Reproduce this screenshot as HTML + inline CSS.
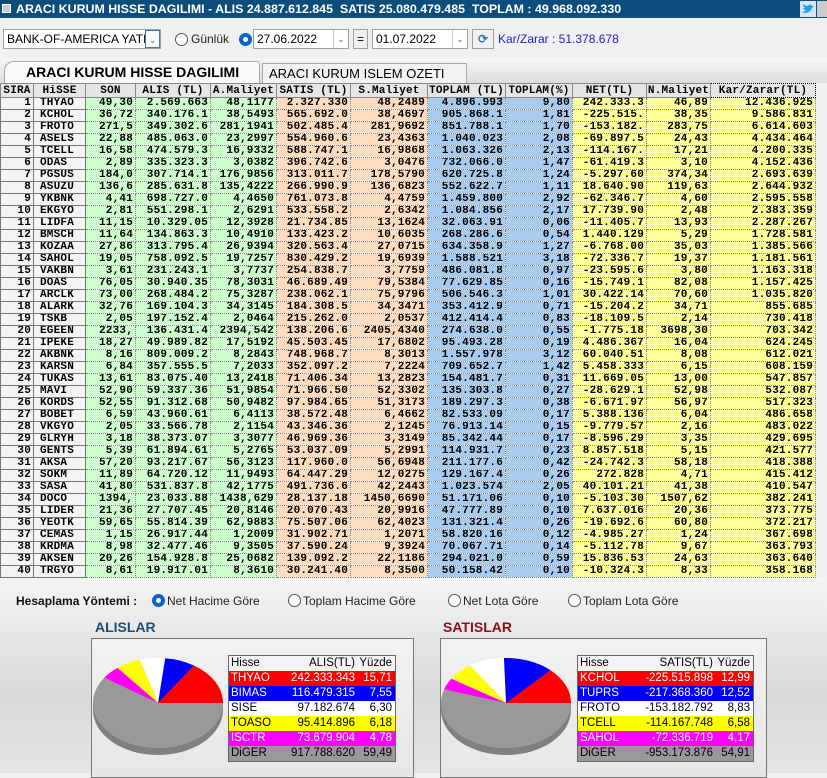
<!DOCTYPE html>
<html><head><meta charset="utf-8"><style>
*{box-sizing:border-box;margin:0;padding:0}
body{width:827px;height:773px;overflow:hidden;background:#f0f0f0;font-family:"Liberation Sans",sans-serif;position:relative}
.title{position:absolute;left:0;top:0;width:827px;height:18px;background:#0d4d7c;color:#fff;font-weight:bold;font-size:12.4px;line-height:18px;padding-left:16px;white-space:pre}
.tb{position:absolute;top:18px;left:0;width:827px;height:42px;background:#f0f0f0}
.box{position:absolute;background:#fff;border:1px solid #a0a0a0;font-size:12px;line-height:18px;padding-left:3px;color:#000;white-space:nowrap;overflow:hidden}
.dd{position:absolute;top:0;right:0;width:15px;height:18px;border-left:1px solid #ccc;color:#666;font-size:9px;text-align:center;background:#fff}
.rad{position:absolute;width:13px;height:13px;border:1px solid #555;border-radius:50%;background:#fff}
.rad.on{border:4px solid #0a64c8;background:#fff}
.lbl{position:absolute;font-size:12px;color:#222;white-space:nowrap}
.tabs{position:absolute;top:58px;left:0;width:827px;height:25px;background:linear-gradient(#f6f6f6,#dedede)}
.tab{position:absolute;border:1px solid #aaa;border-bottom:none;background:#fafafa;font-size:14px;line-height:20px;white-space:nowrap}
table{position:absolute;left:0;top:83px;width:815px;border-collapse:collapse;table-layout:fixed;font-family:"Liberation Mono",monospace;font-weight:bold;font-size:11px;letter-spacing:.2px}
th{height:14px;background:#e6e6e6;border:1px solid #888;font-size:11px;line-height:12px;text-align:center;white-space:nowrap;overflow:hidden}
td{height:12px;line-height:11px;border:1px dotted #888;text-align:right;padding:0 2px;white-space:nowrap;overflow:hidden}
td:nth-child(2){text-align:left;padding-left:6px}
td:nth-child(1),td:nth-child(2){border:1px solid #777;background:#f4f4f4}
.g{background:#ccffcc}.p{background:#ffdcbe}.b{background:#a8ccf0}.y{background:#ffff99}
.bottom{position:absolute;top:578px;left:0;width:827px;height:195px;background:linear-gradient(#f4f4f4,#dadada 60%,#e4e4e4)}
.pbox{position:absolute;top:638px;height:140px;border:1px solid #777;background:linear-gradient(#f2f2f2,#e6e6e6)}
.leg{position:absolute;border:1px solid #666;font-size:11.5px;line-height:15px;width:168px}
.leg div{height:15px;position:relative;padding-left:2px}
.leg span{position:absolute;top:0}
</style></head><body>
<div class="title"><span style="position:absolute;left:2px;top:4px;width:9px;height:9px;background:#ccc;border:1px solid #fff"></span>ARACI KURUM HISSE DAGILIMI - ALIS 24.887.612.845  SATIS 25.080.479.485  TOPLAM : 49.968.092.330<span style="position:absolute;left:800px;top:1px;width:16px;height:16px;background:#d8e4ee"><svg width="16" height="16" viewBox="0 0 16 16"><path d="M2 11c3 2 8 1 10-4l2-2-2 0C11 3 9 3 8 5 6 5 4 4 3 3c0 2 1 3 2 4-1 0-2 0-2 0 0 1 2 2 3 2-1 1-2 2-4 2z" fill="#1da1f2"/></svg></span><span style="position:absolute;left:817px;top:1px;width:10px;height:16px;background:#ccc"></span></div>
<div class="tb">
<div class="box" style="left:3px;top:11px;width:158px;height:20px">BANK-OF-AMERICA YATIRIM<div class="dd" style="border:1px solid #3a7ac0">&#8964;</div></div>
<div class="rad" style="left:175px;top:15px"></div><div class="lbl" style="left:191px;top:14px">Günlük</div>
<div class="rad on" style="left:239px;top:15px"></div>
<div class="box" style="left:253px;top:11px;width:96px;height:20px">27.06.2022<div class="dd">&#8964;</div></div>
<div class="box" style="left:353px;top:11px;width:15px;height:20px;background:#f0f0f0;padding:0;text-align:center">=</div>
<div class="box" style="left:372px;top:11px;width:96px;height:20px">01.07.2022<div class="dd">&#8964;</div></div>
<div class="box" style="left:472px;top:11px;width:22px;height:20px;background:#f0f0f0;padding:0;text-align:center;color:#2a7bd0;font-weight:bold">⟳</div>
<div class="lbl" style="left:498px;top:14px;color:#2020d0">Kar/Zarar : 51.378.678</div>
</div>
<div class="tabs">
<div class="tab" style="left:4px;top:3px;width:256px;height:22px;font-weight:bold;padding-left:21px;border-radius:10px 3px 0 0">ARACI KURUM HISSE DAGILIMI</div>
<div class="tab" style="left:262px;top:5px;width:205px;height:20px;padding-left:6px;background:#f2f2f2;font-size:13px">ARACI KURUM ISLEM OZETI</div>
</div>
<table>
<colgroup><col style="width:33px"><col style="width:52px"><col style="width:50px"><col style="width:75px"><col style="width:66px"><col style="width:74px"><col style="width:77px"><col style="width:78px"><col style="width:67px"><col style="width:74px"><col style="width:64px"><col style="width:105px"></colgroup>
<tr><th>SIRA</th><th>HiSSE</th><th>SON</th><th>ALIS (TL)</th><th>A.Maliyet</th><th>SATIS (TL)</th><th>S.Maliyet</th><th>TOPLAM (TL)</th><th>TOPLAM(%)</th><th>NET(TL)</th><th>N.Maliyet</th><th style="border:1px dotted #000">Kar/Zarar(TL)</th></tr>
<tr><td>1</td><td>THYAO</td><td class=g>49,30</td><td class=g>2.569.663</td><td class=g>48,1177</td><td class=p>2.327.330</td><td class=p>48,2489</td><td class=b>4.896.993</td><td class=b>9,80</td><td class=y>242.333.3</td><td class=y>46,89</td><td class=y>12.436.925</td></tr>
<tr><td>2</td><td>KCHOL</td><td class=g>36,72</td><td class=g>340.176.1</td><td class=g>38,5493</td><td class=p>565.692.0</td><td class=p>38,4697</td><td class=b>905.868.1</td><td class=b>1,81</td><td class=y>-225.515.</td><td class=y>38,35</td><td class=y>9.586.831</td></tr>
<tr><td>3</td><td>FROTO</td><td class=g>271,5</td><td class=g>349.302.6</td><td class=g>281,1941</td><td class=p>502.485.4</td><td class=p>281,9692</td><td class=b>851.788.1</td><td class=b>1,70</td><td class=y>-153.182.</td><td class=y>283,75</td><td class=y>6.614.603</td></tr>
<tr><td>4</td><td>ASELS</td><td class=g>22,88</td><td class=g>485.063.0</td><td class=g>23,2997</td><td class=p>554.960.6</td><td class=p>23,4363</td><td class=b>1.040.023</td><td class=b>2,08</td><td class=y>-69.897.5</td><td class=y>24,43</td><td class=y>4.434.464</td></tr>
<tr><td>5</td><td>TCELL</td><td class=g>16,58</td><td class=g>474.579.3</td><td class=g>16,9332</td><td class=p>588.747.1</td><td class=p>16,9868</td><td class=b>1.063.326</td><td class=b>2,13</td><td class=y>-114.167.</td><td class=y>17,21</td><td class=y>4.200.335</td></tr>
<tr><td>6</td><td>ODAS</td><td class=g>2,89</td><td class=g>335.323.3</td><td class=g>3,0382</td><td class=p>396.742.6</td><td class=p>3,0476</td><td class=b>732.066.0</td><td class=b>1,47</td><td class=y>-61.419.3</td><td class=y>3,10</td><td class=y>4.152.436</td></tr>
<tr><td>7</td><td>PGSUS</td><td class=g>184,0</td><td class=g>307.714.1</td><td class=g>176,9856</td><td class=p>313.011.7</td><td class=p>178,5790</td><td class=b>620.725.8</td><td class=b>1,24</td><td class=y>-5.297.60</td><td class=y>374,34</td><td class=y>2.693.639</td></tr>
<tr><td>8</td><td>ASUZU</td><td class=g>136,6</td><td class=g>285.631.8</td><td class=g>135,4222</td><td class=p>266.990.9</td><td class=p>136,6823</td><td class=b>552.622.7</td><td class=b>1,11</td><td class=y>18.640.90</td><td class=y>119,63</td><td class=y>2.644.932</td></tr>
<tr><td>9</td><td>YKBNK</td><td class=g>4,41</td><td class=g>698.727.0</td><td class=g>4,4650</td><td class=p>761.073.8</td><td class=p>4,4759</td><td class=b>1.459.800</td><td class=b>2,92</td><td class=y>-62.346.7</td><td class=y>4,60</td><td class=y>2.595.558</td></tr>
<tr><td>10</td><td>EKGYO</td><td class=g>2,81</td><td class=g>551.298.1</td><td class=g>2,6291</td><td class=p>533.558.2</td><td class=p>2,6342</td><td class=b>1.084.856</td><td class=b>2,17</td><td class=y>17.739.90</td><td class=y>2,48</td><td class=y>2.383.359</td></tr>
<tr><td>11</td><td>LIDFA</td><td class=g>11,15</td><td class=g>10.329.05</td><td class=g>12,3928</td><td class=p>21.734.85</td><td class=p>13,1624</td><td class=b>32.063.91</td><td class=b>0,06</td><td class=y>-11.405.7</td><td class=y>13,93</td><td class=y>2.287.267</td></tr>
<tr><td>12</td><td>BMSCH</td><td class=g>11,64</td><td class=g>134.863.3</td><td class=g>10,4910</td><td class=p>133.423.2</td><td class=p>10,6035</td><td class=b>268.286.6</td><td class=b>0,54</td><td class=y>1.440.129</td><td class=y>5,29</td><td class=y>1.728.581</td></tr>
<tr><td>13</td><td>KOZAA</td><td class=g>27,86</td><td class=g>313.795.4</td><td class=g>26,9394</td><td class=p>320.563.4</td><td class=p>27,0715</td><td class=b>634.358.9</td><td class=b>1,27</td><td class=y>-6.768.00</td><td class=y>35,03</td><td class=y>1.385.566</td></tr>
<tr><td>14</td><td>SAHOL</td><td class=g>19,05</td><td class=g>758.092.5</td><td class=g>19,7257</td><td class=p>830.429.2</td><td class=p>19,6939</td><td class=b>1.588.521</td><td class=b>3,18</td><td class=y>-72.336.7</td><td class=y>19,37</td><td class=y>1.181.561</td></tr>
<tr><td>15</td><td>VAKBN</td><td class=g>3,61</td><td class=g>231.243.1</td><td class=g>3,7737</td><td class=p>254.838.7</td><td class=p>3,7759</td><td class=b>486.081.8</td><td class=b>0,97</td><td class=y>-23.595.6</td><td class=y>3,80</td><td class=y>1.163.318</td></tr>
<tr><td>16</td><td>DOAS</td><td class=g>76,05</td><td class=g>30.940.35</td><td class=g>78,3031</td><td class=p>46.689.49</td><td class=p>79,5384</td><td class=b>77.629.85</td><td class=b>0,16</td><td class=y>-15.749.1</td><td class=y>82,08</td><td class=y>1.157.425</td></tr>
<tr><td>17</td><td>ARCLK</td><td class=g>73,00</td><td class=g>268.484.2</td><td class=g>75,3287</td><td class=p>238.062.1</td><td class=p>75,9796</td><td class=b>506.546.3</td><td class=b>1,01</td><td class=y>30.422.14</td><td class=y>70,60</td><td class=y>1.035.820</td></tr>
<tr><td>18</td><td>ALARK</td><td class=g>32,76</td><td class=g>169.104.3</td><td class=g>34,3145</td><td class=p>184.308.5</td><td class=p>34,3471</td><td class=b>353.412.9</td><td class=b>0,71</td><td class=y>-15.204.2</td><td class=y>34,71</td><td class=y>855.685</td></tr>
<tr><td>19</td><td>TSKB</td><td class=g>2,05</td><td class=g>197.152.4</td><td class=g>2,0464</td><td class=p>215.262.0</td><td class=p>2,0537</td><td class=b>412.414.4</td><td class=b>0,83</td><td class=y>-18.109.5</td><td class=y>2,14</td><td class=y>730.418</td></tr>
<tr><td>20</td><td>EGEEN</td><td class=g>2233,</td><td class=g>136.431.4</td><td class=g>2394,542</td><td class=p>138.206.6</td><td class=p>2405,4340</td><td class=b>274.638.0</td><td class=b>0,55</td><td class=y>-1.775.18</td><td class=y>3698,30</td><td class=y>703.342</td></tr>
<tr><td>21</td><td>IPEKE</td><td class=g>18,27</td><td class=g>49.989.82</td><td class=g>17,5192</td><td class=p>45.503.45</td><td class=p>17,6802</td><td class=b>95.493.28</td><td class=b>0,19</td><td class=y>4.486.367</td><td class=y>16,04</td><td class=y>624.245</td></tr>
<tr><td>22</td><td>AKBNK</td><td class=g>8,16</td><td class=g>809.009.2</td><td class=g>8,2843</td><td class=p>748.968.7</td><td class=p>8,3013</td><td class=b>1.557.978</td><td class=b>3,12</td><td class=y>60.040.51</td><td class=y>8,08</td><td class=y>612.021</td></tr>
<tr><td>23</td><td>KARSN</td><td class=g>6,84</td><td class=g>357.555.5</td><td class=g>7,2033</td><td class=p>352.097.2</td><td class=p>7,2224</td><td class=b>709.652.7</td><td class=b>1,42</td><td class=y>5.458.333</td><td class=y>6,15</td><td class=y>608.159</td></tr>
<tr><td>24</td><td>TUKAS</td><td class=g>13,61</td><td class=g>83.075.40</td><td class=g>13,2418</td><td class=p>71.406.34</td><td class=p>13,2823</td><td class=b>154.481.7</td><td class=b>0,31</td><td class=y>11.669.05</td><td class=y>13,00</td><td class=y>547.857</td></tr>
<tr><td>25</td><td>MAVI</td><td class=g>52,90</td><td class=g>59.337.36</td><td class=g>51,9854</td><td class=p>71.966.50</td><td class=p>52,3302</td><td class=b>135.303.8</td><td class=b>0,27</td><td class=y>-28.629.1</td><td class=y>52,98</td><td class=y>532.087</td></tr>
<tr><td>26</td><td>KORDS</td><td class=g>52,55</td><td class=g>91.312.68</td><td class=g>50,9482</td><td class=p>97.984.65</td><td class=p>51,3173</td><td class=b>189.297.3</td><td class=b>0,38</td><td class=y>-6.671.97</td><td class=y>56,97</td><td class=y>517.323</td></tr>
<tr><td>27</td><td>BOBET</td><td class=g>6,59</td><td class=g>43.960.61</td><td class=g>6,4113</td><td class=p>38.572.48</td><td class=p>6,4662</td><td class=b>82.533.09</td><td class=b>0,17</td><td class=y>5.388.136</td><td class=y>6,04</td><td class=y>486.658</td></tr>
<tr><td>28</td><td>VKGYO</td><td class=g>2,05</td><td class=g>33.566.78</td><td class=g>2,1154</td><td class=p>43.346.36</td><td class=p>2,1245</td><td class=b>76.913.14</td><td class=b>0,15</td><td class=y>-9.779.57</td><td class=y>2,16</td><td class=y>483.022</td></tr>
<tr><td>29</td><td>GLRYH</td><td class=g>3,18</td><td class=g>38.373.07</td><td class=g>3,3077</td><td class=p>46.969.36</td><td class=p>3,3149</td><td class=b>85.342.44</td><td class=b>0,17</td><td class=y>-8.596.29</td><td class=y>3,35</td><td class=y>429.695</td></tr>
<tr><td>30</td><td>GENTS</td><td class=g>5,39</td><td class=g>61.894.61</td><td class=g>5,2765</td><td class=p>53.037.09</td><td class=p>5,2991</td><td class=b>114.931.7</td><td class=b>0,23</td><td class=y>8.857.518</td><td class=y>5,15</td><td class=y>421.577</td></tr>
<tr><td>31</td><td>AKSA</td><td class=g>57,20</td><td class=g>93.217.67</td><td class=g>56,3123</td><td class=p>117.960.0</td><td class=p>56,6948</td><td class=b>211.177.6</td><td class=b>0,42</td><td class=y>-24.742.3</td><td class=y>58,18</td><td class=y>418.388</td></tr>
<tr><td>32</td><td>SOKM</td><td class=g>11,89</td><td class=g>64.720.12</td><td class=g>11,9493</td><td class=p>64.447.29</td><td class=p>12,0275</td><td class=b>129.167.4</td><td class=b>0,26</td><td class=y>272.828</td><td class=y>4,71</td><td class=y>415.412</td></tr>
<tr><td>33</td><td>SASA</td><td class=g>41,80</td><td class=g>531.837.8</td><td class=g>42,1775</td><td class=p>491.736.6</td><td class=p>42,2443</td><td class=b>1.023.574</td><td class=b>2,05</td><td class=y>40.101.21</td><td class=y>41,38</td><td class=y>410.547</td></tr>
<tr><td>34</td><td>DOCO</td><td class=g>1394,</td><td class=g>23.033.88</td><td class=g>1438,629</td><td class=p>28.137.18</td><td class=p>1450,6690</td><td class=b>51.171.06</td><td class=b>0,10</td><td class=y>-5.103.30</td><td class=y>1507,62</td><td class=y>382.241</td></tr>
<tr><td>35</td><td>LIDER</td><td class=g>21,36</td><td class=g>27.707.45</td><td class=g>20,8146</td><td class=p>20.070.43</td><td class=p>20,9916</td><td class=b>47.777.89</td><td class=b>0,10</td><td class=y>7.637.016</td><td class=y>20,36</td><td class=y>373.775</td></tr>
<tr><td>36</td><td>YEOTK</td><td class=g>59,65</td><td class=g>55.814.39</td><td class=g>62,9883</td><td class=p>75.507.06</td><td class=p>62,4023</td><td class=b>131.321.4</td><td class=b>0,26</td><td class=y>-19.692.6</td><td class=y>60,80</td><td class=y>372.217</td></tr>
<tr><td>37</td><td>CEMAS</td><td class=g>1,15</td><td class=g>26.917.44</td><td class=g>1,2009</td><td class=p>31.902.71</td><td class=p>1,2071</td><td class=b>58.820.16</td><td class=b>0,12</td><td class=y>-4.985.27</td><td class=y>1,24</td><td class=y>367.698</td></tr>
<tr><td>38</td><td>KRDMA</td><td class=g>8,98</td><td class=g>32.477.46</td><td class=g>9,3505</td><td class=p>37.590.24</td><td class=p>9,3924</td><td class=b>70.067.71</td><td class=b>0,14</td><td class=y>-5.112.78</td><td class=y>9,67</td><td class=y>363.793</td></tr>
<tr><td>39</td><td>AKSEN</td><td class=g>20,26</td><td class=g>154.928.8</td><td class=g>25,0682</td><td class=p>139.092.2</td><td class=p>22,1186</td><td class=b>294.021.0</td><td class=b>0,59</td><td class=y>15.836.53</td><td class=y>24,63</td><td class=y>363.640</td></tr>
<tr><td>40</td><td>TRGYO</td><td class=g>8,61</td><td class=g>19.917.01</td><td class=g>8,3610</td><td class=p>30.241.40</td><td class=p>8,3500</td><td class=b>50.158.42</td><td class=b>0,10</td><td class=y>-10.324.3</td><td class=y>8,33</td><td class=y>358.168</td></tr>
</table>
<div class="bottom"></div>
<div class="lbl" style="left:16px;top:594px;font-weight:bold;color:#111">Hesaplama Yöntemi :</div>
<div class="rad on" style="left:152px;top:594px"></div><div class="lbl" style="left:167px;top:594px">Net Hacime Göre</div>
<div class="rad" style="left:288px;top:594px"></div><div class="lbl" style="left:303px;top:594px">Toplam Hacime Göre</div>
<div class="rad" style="left:448px;top:594px"></div><div class="lbl" style="left:463px;top:594px">Net Lota Göre</div>
<div class="rad" style="left:568px;top:594px"></div><div class="lbl" style="left:583px;top:594px">Toplam Lota Göre</div>
<div class="lbl" style="left:95px;top:619px;font-weight:bold;font-size:14px;color:#1b4f78">ALISLAR</div>
<div class="lbl" style="left:443px;top:619px;font-weight:bold;font-size:14px;color:#8b1010">SATISLAR</div>
<div class="pbox" style="left:91px;width:323px"></div>
<div class="pbox" style="left:440px;width:327px"></div>
<svg style="position:absolute;left:0;top:0" width="827" height="773">
<g fill="#808080"><ellipse cx="158" cy="710" rx="65" ry="45"/><rect x="93" y="703" width="130" height="7"/><ellipse cx="506" cy="710" rx="65" ry="45"/><rect x="441" y="703" width="130" height="7"/></g>
<path d="M158 703 L223 703 A65 45 0 0 0 193.9 665.5Z" fill="#f00"/>
<path d="M158 703 L193.9 665.5 A65 45 0 0 0 165.1 658.3Z" fill="#00f"/>
<path d="M158 703 L165.1 658.3 A65 45 0 0 0 139.7 659.8Z" fill="#fff"/>
<path d="M158 703 L139.7 659.8 A65 45 0 0 0 117.5 667.9Z" fill="#ff0"/>
<path d="M158 703 L117.5 667.9 A65 45 0 0 0 104.3 677.7Z" fill="#f0f"/>
<path d="M158 703 L104.3 677.7 A65 45 0 1 0 223 703Z" fill="#999"/>
<path d="M506 703 L571 703 A65 45 0 0 0 550.5 670.2Z" fill="#f00"/>
<path d="M506 703 L550.5 670.2 A65 45 0 0 0 503.9 658Z" fill="#00f"/>
<path d="M506 703 L503.9 658 A65 45 0 0 0 469.9 665.6Z" fill="#fff"/>
<path d="M506 703 L469.9 665.6 A65 45 0 0 0 451.2 678.7Z" fill="#ff0"/>
<path d="M506 703 L451.2 678.7 A65 45 0 0 0 444.1 689.4Z" fill="#f0f"/>
<path d="M506 703 L444.1 689.4 A65 45 0 1 0 571 703Z" fill="#999"/>
</svg>
<div class="leg" style="left:228px;top:655px">
<div style="background:#f4f4f4">Hisse<span style="right:40px">ALIS(TL)</span><span style="right:3px">Yüzde</span></div>
<div style="background:#f00;color:#fff">THYAO<span style="right:40px">242.333.343</span><span style="right:3px">15,71</span></div>
<div style="background:#00f;color:#fff">BIMAS<span style="right:40px">116.479.315</span><span style="right:3px">7,55</span></div>
<div style="background:#fff">SISE<span style="right:40px">97.182.674</span><span style="right:3px">6,30</span></div>
<div style="background:#ff0">TOASO<span style="right:40px">95.414.896</span><span style="right:3px">6,18</span></div>
<div style="background:#f0f;color:#fff">ISCTR<span style="right:40px">73.679.904</span><span style="right:3px">4,78</span></div>
<div style="background:#999">DiGER<span style="right:40px">917.788.620</span><span style="right:3px">59,49</span></div>
</div>
<div class="leg" style="left:577px;top:655px;width:177px">
<div style="background:#f4f4f4">Hisse<span style="right:40px">SATIS(TL)</span><span style="right:3px">Yüzde</span></div>
<div style="background:#f00;color:#fff">KCHOL<span style="right:40px">-225.515.898</span><span style="right:3px">12,99</span></div>
<div style="background:#00f;color:#fff">TUPRS<span style="right:40px">-217.368.360</span><span style="right:3px">12,52</span></div>
<div style="background:#fff">FROTO<span style="right:40px">-153.182.792</span><span style="right:3px">8,83</span></div>
<div style="background:#ff0">TCELL<span style="right:40px">-114.167.748</span><span style="right:3px">6,58</span></div>
<div style="background:#f0f;color:#fff">SAHOL<span style="right:40px">-72.336.719</span><span style="right:3px">4,17</span></div>
<div style="background:#999">DiGER<span style="right:40px">-953.173.876</span><span style="right:3px">54,91</span></div>
</div>
</body></html>
